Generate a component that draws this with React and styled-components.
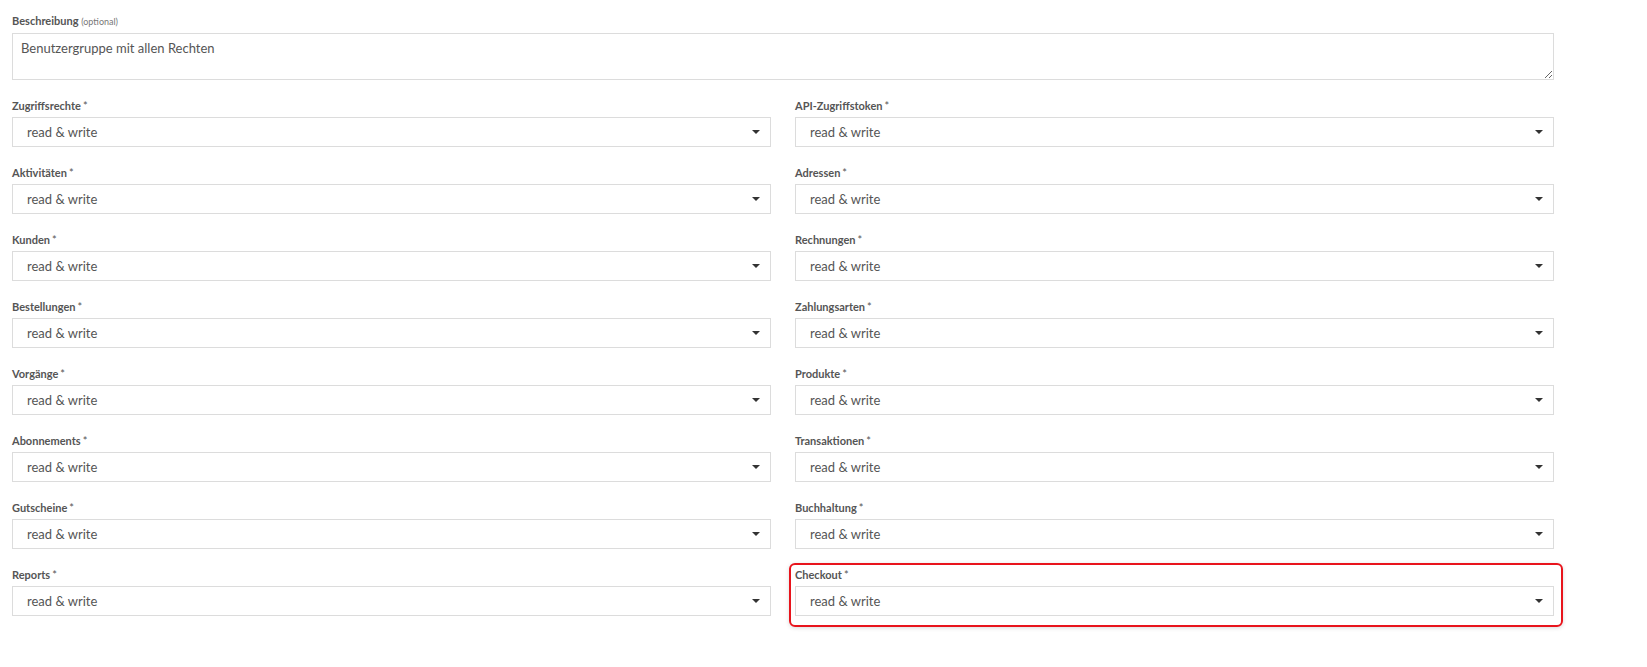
import React from "react";
import styled, { createGlobalStyle } from "styled-components";

const GlobalStyle = createGlobalStyle`
  html, body {
    margin: 0;
    padding: 0;
    background: #fff;
    font-family: Lato, "Open Sans", sans-serif;
    color: #555;
  }
`;

const fields = [
  ["Zugriffsrechte", "API-Zugriffstoken"],
  ["Aktivitäten", "Adressen"],
  ["Kunden", "Rechnungen"],
  ["Bestellungen", "Zahlungsarten"],
  ["Vorgänge", "Produkte"],
  ["Abonnements", "Transaktionen"],
  ["Gutscheine", "Buchhaltung"],
  ["Reports", "Checkout"],
];

const Caret = () => (
  <svg width="8" height="4" viewBox="0 0 8 4">
    <path d="M0 0 L8 0 L4 4 Z" fill="#333" />
  </svg>
);

const SelectField = ({ label, highlighted }) => (
  <Field $highlighted={highlighted}>
    <Label>
      {label}
      <Req>*</Req>
    </Label>
    <Select>
      <Value>read &amp; write</Value>
      <Caret />
    </Select>
  </Field>
);

const App = () => (
  <>
    <GlobalStyle />
    <Page>
      <Form>
        <Field>
          <Label>
            Beschreibung <Optional>(optional)</Optional>
          </Label>
          <TextArea defaultValue="Benutzergruppe mit allen Rechten" />
        </Field>
        <Grid>
          {fields.flat().map((name) => (
            <SelectField key={name} label={name} highlighted={name === "Checkout"} />
          ))}
        </Grid>
      </Form>
    </Page>
  </>
);

const Page = styled.div`
  padding: 14px 0 0 12px;
  height: 667px;
  box-sizing: border-box;
`;

const Form = styled.div`
  width: 1542px;
  display: flex;
  flex-direction: column;
  gap: 19px;
`;

const Grid = styled.div`
  display: grid;
  grid-template-columns: 1fr 1fr;
  column-gap: 24px;
  row-gap: 19px;
`;

const Field = styled.div`
  position: relative;
  display: flex;
  flex-direction: column;
  gap: 4px;

  &::after {
    content: "";
    display: ${(p) => (p.$highlighted ? "block" : "none")};
    position: absolute;
    left: -6px;
    right: -9px;
    top: -5px;
    bottom: -11px;
    border: 2px solid #e8141c;
    border-radius: 6px;
    box-shadow: 0 1px 4px rgba(0, 0, 0, 0.15);
    pointer-events: none;
  }
`;

const Label = styled.label`
  font-size: 11px;
  line-height: 14px;
  font-weight: 700;
  color: #555;
`;

const Req = styled.span`
  margin-left: 2px;
  font-weight: 400;
`;

const Optional = styled.span`
  font-size: 9px;
  font-weight: 400;
  color: #777;
`;

const TextArea = styled.textarea`
  box-sizing: border-box;
  width: 100%;
  height: 47px;
  padding: 6px 8px;
  border: 1px solid #dcdcdc;
  border-radius: 0;
  font-family: inherit;
  font-size: 13px;
  color: #555;
  outline: none;
  resize: vertical;
`;

const Select = styled.div`
  box-sizing: border-box;
  height: 30px;
  border: 1px solid #dcdcdc;
  display: flex;
  align-items: center;
  justify-content: space-between;
  padding: 0 10px 0 14px;
  background: #fff;
`;

const Value = styled.span`
  font-size: 13px;
  color: #555;
`;

export default App;
